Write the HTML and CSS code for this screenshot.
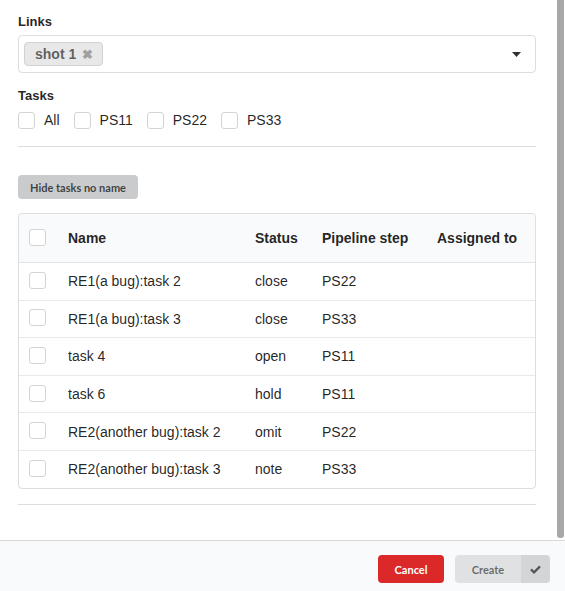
FILE: index.html
```html
<!DOCTYPE html>
<html>
<head>
<meta charset="utf-8">
<link rel="stylesheet" href="styles.css">
</head>
<body>
<div class="modal">
  <div class="content">
    <div class="field">
      <div class="label">Links</div>
      <div class="dropdown">
        <span class="chip">shot 1 <span class="chip-x">✖</span></span>
        <svg class="caret" width="9" height="5" viewBox="0 0 9 5"><path d="M0 0h9L4.5 5z" fill="#333"/></svg>
      </div>
    </div>
    <div class="field">
      <div class="label">Tasks</div>
      <div class="checks">
        <label class="check"><span class="box"></span>All</label>
        <label class="check"><span class="box"></span>PS11</label>
        <label class="check"><span class="box"></span>PS22</label>
        <label class="check"><span class="box"></span>PS33</label>
      </div>
    </div>
    <div class="divider"></div>
    <button class="btn-hide">Hide tasks no name</button>
    <table class="tasks">
      <colgroup>
        <col class="c-check"><col class="c-name"><col class="c-status"><col class="c-step"><col class="c-assign">
      </colgroup>
      <thead>
        <tr><th><span class="box"></span></th><th>Name</th><th>Status</th><th>Pipeline step</th><th>Assigned to</th></tr>
      </thead>
      <tbody>
        <tr><td><span class="box"></span></td><td>RE1(a bug):task 2</td><td>close</td><td>PS22</td><td></td></tr>
        <tr><td><span class="box"></span></td><td>RE1(a bug):task 3</td><td>close</td><td>PS33</td><td></td></tr>
        <tr><td><span class="box"></span></td><td>task 4</td><td>open</td><td>PS11</td><td></td></tr>
        <tr><td><span class="box"></span></td><td>task 6</td><td>hold</td><td>PS11</td><td></td></tr>
        <tr><td><span class="box"></span></td><td>RE2(another bug):task 2</td><td>omit</td><td>PS22</td><td></td></tr>
        <tr><td><span class="box"></span></td><td>RE2(another bug):task 3</td><td>note</td><td>PS33</td><td></td></tr>
      </tbody>
    </table>
    <div class="divider bottom"></div>
    <div class="scroll-thumb"></div>
  </div>
  <div class="actions">
    <button class="btn-cancel">Cancel</button>
    <div class="btn-create">
      <span class="create-text">Create</span>
      <span class="create-icon"><svg width="11" height="9" viewBox="0 0 11 9"><path d="M1 4.4l3 3 6-6" fill="none" stroke="#555" stroke-width="2.2"/></svg></span>
    </div>
  </div>
</div>
</body>
</html>
```
FILE: styles.css
```css
html, body {
  margin: 0;
  padding: 0;
  background: #fff;
}
body {
  font-family: "Liberation Sans", Arial, sans-serif;
  font-size: 14px;
  color: rgba(0,0,0,0.87);
}
.modal {
  width: 565px;
  height: 591px;
  display: flex;
  flex-direction: column;
  overflow: hidden;
}
.content {
  position: relative;
  height: 540px;
  box-sizing: border-box;
  padding: 14px 29px 0 18px;
}
.scroll-thumb {
  position: absolute;
  right: 1px;
  top: 0;
  width: 7px;
  height: 538px;
  background: #a8a8a8;
  border-radius: 0 0 3px 3px;
}
.field { margin-bottom: 15px; }
.label {
  font-size: 13px;
  font-weight: bold;
  line-height: 16px;
  color: rgba(0,0,0,0.87);
  margin-bottom: 5px;
}
.dropdown {
  height: 38px;
  box-sizing: border-box;
  border: 1px solid rgba(34,36,38,0.15);
  border-radius: 4px;
  display: flex;
  align-items: center;
  justify-content: space-between;
  padding: 0 14px 0 5px;
}
.chip {
  display: inline-flex;
  align-items: center;
  height: 24px;
  box-sizing: border-box;
  padding: 0 9px 0 10px;
  background: #e8e8e8;
  border: 1px solid #d2d2d2;
  border-radius: 4px;
  font-weight: bold;
  font-size: 14px;
  color: rgba(0,0,0,0.6);
  gap: 6px;
}
.chip-x {
  font-size: 13px;
  color: #a0a0a0;
}
.caret { display: block; }
.field .label + .checks { margin-top: 8px; }
.checks {
  display: flex;
  gap: 14px;
  height: 17px;
  align-items: center;
}
.check {
  display: flex;
  align-items: center;
  gap: 9px;
  line-height: 17px;
}
.box {
  display: inline-block;
  width: 17px;
  height: 17px;
  box-sizing: border-box;
  border: 1px solid #d4d4d5;
  border-radius: 3px;
  background: #fff;
  vertical-align: middle;
}
.divider {
  height: 1px;
  background: rgba(34,36,38,0.15);
  margin-top: 17px;
}
.btn-hide {
  display: block;
  margin: 28px 0 14px;
  height: 24px;
  width: 120px;
  padding: 0;
  border: none;
  border-radius: 4px;
  background: #cacbcd;
  font-family: Lato, sans-serif;
  font-weight: bold;
  font-size: 11px;
  color: rgba(0,0,0,0.7);
}
.tasks {
  width: 518px;
  border-collapse: separate;
  border-spacing: 0;
  border: 1px solid rgba(34,36,38,0.15);
  border-radius: 4px;
  table-layout: fixed;
}
.c-check { width: 38px; }
.c-name { width: 187px; }
.c-status { width: 67px; }
.c-step { width: 115px; }
.tasks th {
  background: #f9fafb;
  text-align: left;
  font-weight: bold;
  height: 49px;
  box-sizing: border-box;
  padding: 0 11px;
  border-bottom: 1px solid rgba(34,36,38,0.1);
  vertical-align: middle;
}
.tasks th:first-child, .tasks td:first-child { padding-left: 10px; }
.tasks th:first-child { border-top-left-radius: 4px; }
.tasks th:last-child { border-top-right-radius: 4px; }
.tasks td {
  height: 37.6px;
  box-sizing: border-box;
  padding: 0 11px;
  border-top: 1px solid rgba(34,36,38,0.1);
  vertical-align: middle;
}
.tasks tbody tr:first-child td { border-top: none; height: 36.6px; }
.tasks th .box, .tasks td .box { display: block; margin-top: -2px; }
.divider.bottom { margin-top: 15px; }
.actions {
  flex: 1;
  background: #f9fafb;
  border-top: 1px solid rgba(34,36,38,0.15);
  display: flex;
  justify-content: flex-end;
  align-items: flex-start;
  padding: 14px 15px 0 0;
  gap: 11px;
}
.btn-cancel {
  height: 28px;
  width: 66px;
  border: none;
  border-radius: 4px;
  background: #db2828;
  color: #fff;
  font-family: Lato, sans-serif;
  font-weight: bold;
  font-size: 11px;
  padding: 0;
}
.btn-create {
  display: flex;
  height: 28px;
  border-radius: 4px;
  overflow: hidden;
}
.create-text {
  width: 66px;
  background: #e0e1e2;
  color: rgba(0,0,0,0.55);
  font-family: Lato, sans-serif;
  font-weight: bold;
  font-size: 11px;
  display: flex;
  align-items: center;
  justify-content: center;
}
.create-icon {
  width: 29px;
  background: #d4d5d6;
  display: flex;
  align-items: center;
  justify-content: center;
}
```
